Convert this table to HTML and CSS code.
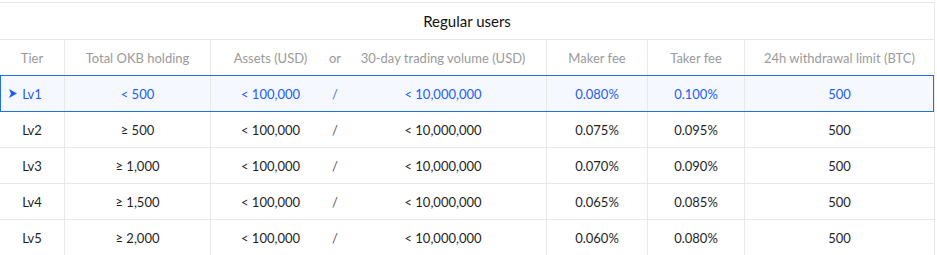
FILE: index.html
```html
<!DOCTYPE html>
<html lang="en">
<head>
<meta charset="utf-8">
<title>Regular users</title>
<link rel="stylesheet" href="styles.css">
</head>
<body>
<div class="fee-table">
  <div class="title-row">Regular users</div>
  <div class="row head">
    <div class="cell">Tier</div>
    <div class="cell bl">Total OKB holding</div>
    <div class="cell bl">Assets (USD)</div>
    <div class="cell">or</div>
    <div class="cell">30-day trading volume (USD)</div>
    <div class="cell bl">Maker fee</div>
    <div class="cell bl">Taker fee</div>
    <div class="cell bl">24h withdrawal limit (BTC)</div>
  </div>
  <div class="row body active">
    <div class="cell tier"><svg class="pointer" width="8" height="9" viewBox="0 0 8 9"><path d="M0 0 L8 4.5 L0 9 L2 4.5 Z" fill="#1d5cf5"/></svg>Lv1</div>
    <div class="cell bl">&lt; 500</div>
    <div class="cell bl">&lt; 100,000</div>
    <div class="cell sep">/</div>
    <div class="cell">&lt; 10,000,000</div>
    <div class="cell bl">0.080%</div>
    <div class="cell bl">0.100%</div>
    <div class="cell bl">500</div>
  </div>
  <div class="row body">
    <div class="cell tier">Lv2</div>
    <div class="cell bl">≥ 500</div>
    <div class="cell bl">&lt; 100,000</div>
    <div class="cell sep">/</div>
    <div class="cell">&lt; 10,000,000</div>
    <div class="cell bl">0.075%</div>
    <div class="cell bl">0.095%</div>
    <div class="cell bl">500</div>
  </div>
  <div class="row body">
    <div class="cell tier">Lv3</div>
    <div class="cell bl">≥ 1,000</div>
    <div class="cell bl">&lt; 100,000</div>
    <div class="cell sep">/</div>
    <div class="cell">&lt; 10,000,000</div>
    <div class="cell bl">0.070%</div>
    <div class="cell bl">0.090%</div>
    <div class="cell bl">500</div>
  </div>
  <div class="row body">
    <div class="cell tier">Lv4</div>
    <div class="cell bl">≥ 1,500</div>
    <div class="cell bl">&lt; 100,000</div>
    <div class="cell sep">/</div>
    <div class="cell">&lt; 10,000,000</div>
    <div class="cell bl">0.065%</div>
    <div class="cell bl">0.085%</div>
    <div class="cell bl">500</div>
  </div>
  <div class="row body">
    <div class="cell tier">Lv5</div>
    <div class="cell bl">≥ 2,000</div>
    <div class="cell bl">&lt; 100,000</div>
    <div class="cell sep">/</div>
    <div class="cell">&lt; 10,000,000</div>
    <div class="cell bl">0.060%</div>
    <div class="cell bl">0.080%</div>
    <div class="cell bl">500</div>
  </div>
</div>
</body>
</html>
```
FILE: styles.css
```css
html, body {
  margin: 0;
  padding: 0;
  background: #ffffff;
}
body {
  padding-top: 2px;
  font-family: Lato, "Noto Sans", "Liberation Sans", sans-serif;
  font-size: 13px;
  color: #1f1f1f;
}
.fee-table {
  width: 935px;
  box-sizing: border-box;
  border-top: 1px solid #e8e8e8;
  border-right: 1px solid #e8e8e8;
}
.title-row {
  height: 37px;
  box-sizing: border-box;
  border-bottom: 1px solid #e8e8e8;
  display: flex;
  align-items: center;
  justify-content: center;
  font-size: 15px;
  color: #121212;
}
.row {
  display: grid;
  grid-template-columns: 64px 146px 120px 10px 206px 101px 97px 190px;
  height: 36px;
  box-sizing: border-box;
  border-bottom: 1px solid #e8e8e8;
  position: relative;
}
.cell {
  display: flex;
  align-items: center;
  justify-content: center;
  white-space: nowrap;
  position: relative;
  min-width: 0;
  padding-top: 1px;
}
.bl {
  border-left: 1px solid #e8e8e8;
}
.head {
  color: #9a9a9a;
}
.sep {
  color: #555;
}
.active {
  background: #f5f8fe;
  color: #1d5cf5;
}
.active .sep {
  color: #4a72d8;
}
.active::after {
  content: "";
  position: absolute;
  left: 0;
  right: 0;
  top: -1px;
  bottom: -1px;
  border: 1px solid #1e6ff0;
  pointer-events: none;
}
.pointer {
  position: absolute;
  left: 9px;
  top: 13px;
}
```
